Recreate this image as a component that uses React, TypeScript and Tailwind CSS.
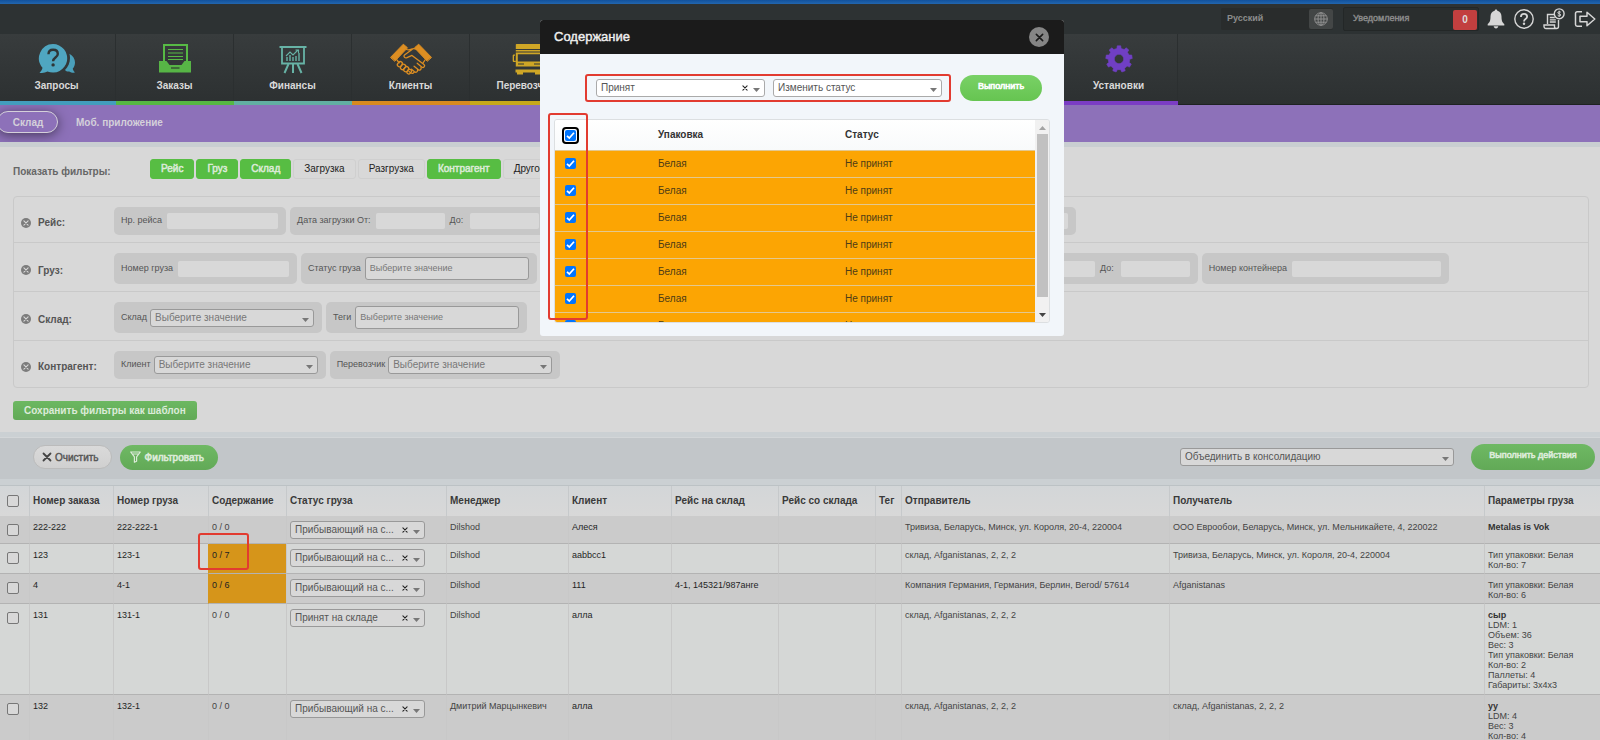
import type { ReactNode } from "react";

const FONT = "font-['Liberation_Sans',Arial,sans-serif]";

/* ---------- icons ---------- */

function QuestionBubbles() {
  return (
    <svg width="38" height="30" viewBox="0 0 38 30">
      <path d="M27 26c3-3 5-7 5-12 0-1.500-.2-3-.6-4.300C35 11.500 37 15 37 18.500c0 2.500-.9 4.600-2.300 6.300.5 1.600 1.300 2.900 2.300 3.800-2.500.2-4.400-.3-5.800-1.200-1.300.4-2.700.3-4.200-1.400z" fill="#4a9fba" />
      <path d="M15 0a14.300 14.300 0 1 1-5.600 27.500C7.400 28.700 4.600 29.200 1.500 28.700c1.800-1.500 2.700-3.300 3-5A14.300 14.300 0 0 1 15 0z" fill="#4fa6c1" />
      <path d="M10.500 10.200c0-2.800 2-4.400 4.600-4.400 2.700 0 4.700 1.600 4.700 4.200 0 3.600-4.700 3.500-4.700 7.200" fill="none" stroke="#2f3536" strokeWidth="2.400" />
      <circle cx="15.100" cy="20.900" r="1.700" fill="#2f3536" />
    </svg>
  );
}

function OrderTray() {
  return (
    <svg width="34" height="30" viewBox="0 0 34 30">
      <path d="M6 17V1h23v16" fill="none" stroke="#57ba45" strokeWidth="2" />
      <path d="M10 5.500h15M10 9h15M10 12.500h15M10 15.500h15" stroke="#57ba45" strokeWidth="1.200" />
      <path d="M1 17h7.500l3 4h12l3-4H33v11.500H1z" fill="#57b546" />
      <path d="M13 24h8.500" stroke="#2f3a30" strokeWidth="1.200" />
    </svg>
  );
}

function FinanceBoard() {
  return (
    <svg width="28" height="30" viewBox="0 0 28 30" fill="none" stroke="#67b3a6">
      <path d="M.5 3h27" strokeWidth="2" />
      <path d="M3 4v15.500h22V4" strokeWidth="1.800" />
      <path d="M8 17v-4M11 17v-6M14 17v-4M17 17v-5M20 17V9" strokeWidth="1.400" />
      <path d="M7 12l4-4 3 3 5-5M16.500 6H19.500v3" strokeWidth="1.100" />
      <path d="M9.500 20L5.500 29M14 20v9M18.500 20l4 9" strokeWidth="2" />
    </svg>
  );
}

function Handshake() {
  return (
    <svg width="42" height="32" viewBox="0 0 42 32" fill="none" stroke="#dd8e22" strokeLinejoin="round" strokeLinecap="round">
      <path d="M.7 14.200L13.300 1.200l4.200 3.600L5 18z" fill="#dd8e22" strokeWidth="1" />
      <path d="M41.300 14.200L28.700 1.200l-4.200 3.600L37 18z" fill="#dd8e22" strokeWidth="1" />
      <path d="M16.500 6.500c2 .8 3 .6 5-.4 2-.9 3.500-.6 5 .2" strokeWidth="1.300" />
      <path d="M22 6.500l-7.500 5.500c-1.400 1.300.2 3.400 2.500 2.700l5-2.300L34 21.500c1.600 1.600-.4 3.900-2.300 2.500l-4.500-3.800" strokeWidth="1.300" />
      <path d="M31 24.500c.8 1.900-1.200 3.300-2.900 2.100l-4-3.400M27.500 27c.5 1.800-1.500 2.900-3 1.800l-3-2.600M24 29.200c-.5 1.300-2 1.500-3.300.5l-1.700-1.300" strokeWidth="1.300" />
      <path d="M7 17l2.200 2.800M35 17l-2 3" strokeWidth="1.300" />
      <g strokeWidth="1.300">
        <rect x="8" y="18.500" width="4" height="5.500" rx="2" transform="rotate(40 10 21)" />
        <rect x="11" y="21" width="4" height="5.800" rx="2" transform="rotate(40 13 24)" />
        <rect x="14.300" y="23.500" width="4" height="5.500" rx="2" transform="rotate(40 16.300 26)" />
        <rect x="17.500" y="26" width="3.600" height="5" rx="1.800" transform="rotate(40 19 28.500)" />
      </g>
    </svg>
  );
}

function TruckFront() {
  return (
    <svg width="34" height="32" viewBox="0 0 34 32" fill="#cfa626">
      <path d="M4.500 1h25c.4 0 .7.300.7.700V6H3.800V1.700c0-.4.300-.7.700-.7z" />
      <path d="M3.800 7h26.400v1.500H3.800z" />
      <path fillRule="evenodd" d="M3.800 9.500h26.400v14H3.800zM5.800 11.300v7.200h22.400v-7.200z" />
      <path d="M3 11.500v1.200H2v5h1.800v1.200H1.600c-.5 0-.9-.4-.9-.9v-5.600c0-.5.400-.9.900-.9zM31 11.500v1.200h1v5h-1.800v1.200h2.200c.5 0 .9-.4.900-.9v-5.600c0-.5-.4-.9-.9-.9z" />
      <path d="M3.500 26.500h27v3h-27zM5 29.500h6v2H5zM23 29.500h6v2h-6z" />
      <path d="M6 21h6M22 21h6" stroke="#2f3536" strokeWidth="1" />
    </svg>
  );
}

function Gear() {
  const teeth = 9;
  const step = (Math.PI * 2) / teeth;
  const at = (r: number, a: number) => `${(14 + r * Math.sin(a)).toFixed(2)} ${(14 - r * Math.cos(a)).toFixed(2)}`;
  let d = "";
  for (let i = 0; i < teeth; i++) {
    const a = i * step;
    d += `${i ? "L" : "M"}${at(10.800, a - step * 0.280)}L${at(13.300, a - step * 0.190)}L${at(13.300, a + step * 0.190)}L${at(10.800, a + step * 0.280)}`;
  }
  d += "ZM14 9.300a4.700 4.700 0 1 0 0 9.400a4.700 4.700 0 1 0 0-9.400Z";
  return (
    <svg width="28" height="28" viewBox="0 0 28 28">
      <path d={d} fill="#703fc4" fillRule="evenodd" stroke="#703fc4" strokeWidth=".6" strokeLinejoin="round" />
    </svg>
  );
}

function Globe() {
  return (
    <svg width="14" height="14" viewBox="0 0 14 14" fill="none" stroke="#8f8f8f" strokeWidth="1">
      <circle cx="7" cy="7" r="6.300" />
      <ellipse cx="7" cy="7" rx="3" ry="6.300" />
      <path d="M7 .7v12.600M.7 7h12.600M1.700 3.800h10.600M1.700 10.200h10.600" />
    </svg>
  );
}

function Bell() {
  return (
    <svg width="18" height="20" viewBox="0 0 18 20" fill="#d6d6d6">
      <path d="M9 .5c.8 0 1.300.5 1.300 1.300 2.700.6 4.200 2.900 4.200 5.700 0 4.500 1 6 2.800 7.500V16.500H.7V15c1.800-1.500 2.800-3 2.800-7.500 0-2.800 1.500-5.100 4.200-5.700C7.700 1 8.200.5 9 .5z" />
      <path d="M6.700 17.300h4.600c-.2 1.300-1.100 2.200-2.300 2.200s-2.100-.9-2.300-2.200z" />
    </svg>
  );
}

function HelpCircle() {
  return (
    <svg width="20" height="20" viewBox="0 0 20 20" fill="none" stroke="#d6d6d6">
      <circle cx="10" cy="10" r="9.200" strokeWidth="1.400" />
      <path d="M6.900 8c0-2 1.300-3.100 3.100-3.100s3.100 1 3.100 2.800c0 2.400-3.100 2.300-3.100 4.700" strokeWidth="1.800" />
      <circle cx="10" cy="14.800" r="1.200" fill="#d6d6d6" stroke="none" />
    </svg>
  );
}

function Invoice() {
  return (
    <svg width="22" height="22" viewBox="0 0 22 22" fill="none" stroke="#d6d6d6" strokeWidth="1.400">
      <path d="M4.500 16V6.500h7M15.500 12v6.500c0 1-.8 2-2 2H3c-1.300 0-2-1-2-2.200V17h10.500v1.800c0 1 .8 1.700 2 1.700" />
      <path d="M6.800 9.500h5M6.800 11.800h6M6.800 14h6" strokeWidth="1.300" />
      <circle cx="16.200" cy="5.800" r="4.900" fill="#2d3233" />
      <path d="M17.800 4.300c-.4-.7-3-.9-3 .4 0 1.500 3 .8 3 2.300 0 1.300-2.800 1.200-3.200.2M16.200 2.700v6.200" strokeWidth="1" />
    </svg>
  );
}

function Logout() {
  return (
    <svg width="22" height="18" viewBox="0 0 22 18" fill="none" stroke="#d6d6d6" strokeWidth="1.500" strokeLinejoin="round">
      <path d="M8 1.700H3.200C2.200 1.700 1.500 2.400 1.500 3.400v11.200c0 1 .7 1.700 1.700 1.700H8" />
      <path d="M6 6.200h7V2.300L20.800 9l-7.800 6.700v-3.900H6z" />
    </svg>
  );
}

function Cross({ className, size }: { className: string; size: string }) {
  return (
    <svg className={`${size} ${className}`} viewBox="0 0 10 10" fill="none" stroke="currentColor" strokeWidth="1.800" strokeLinecap="round">
      <path d="M1.500 1.500l7 7M8.500 1.500l-7 7" />
    </svg>
  );
}

function Caret({ className }: { className: string }) {
  return (
    <svg className={`h-1 w-[7px] ${className}`} viewBox="0 0 7 4">
      <path d="M0 0h7L3.500 4z" fill="currentColor" />
    </svg>
  );
}

/* ---------- controls ---------- */

function SelectBox({ label, value, width, clear, tone = "bg-[#d8d8d8] border-[#999] text-[#555]" }: { label: string; value: string; width: string; clear?: boolean; tone?: string }) {
  return (
    <span className={`relative block h-[18px] ${width}`}>
      <select aria-label={label} className={`block h-full w-full appearance-none rounded-[3px] border pl-1 pr-2 text-[10px] leading-4 ${tone}`}>
        <option>{value}</option>
      </select>
      {clear && <Cross size="size-[6px]" className="pointer-events-none absolute right-[17px] top-[6px] text-[#222]" />}
      <Caret className="pointer-events-none absolute right-[5px] top-[9px] text-[#777]" />
    </span>
  );
}

function Group({ className = "", children }: { className?: string; children: ReactNode }) {
  return <div className={`flex items-center gap-[3px] rounded-[5px] bg-[#c7c7c7] pl-[7px] pr-2 ${className}`}>{children}</div>;
}

function TextField({ label, width, gap = "gap-[5px]" }: { label: string; width: string; gap?: string }) {
  return (
    <label className={`flex items-center whitespace-nowrap ${gap}`}>
      {label}
      <input className={`h-4 rounded-xs bg-[#d8d8d8] ${width}`} />
    </label>
  );
}

function TagField({ label }: { label: string }) {
  return (
    <label className="flex items-center gap-1 whitespace-nowrap">
      {label}
      <input placeholder="Выберите значение" className="h-[23px] w-[164px] rounded-[3px] border border-[#999] bg-[#d8d8d8] pb-0.5 pl-1 text-[9px] placeholder:text-[#777]" />
    </label>
  );
}

function PickField({ label }: { label: string }) {
  return (
    <div className="flex items-center gap-[3px] whitespace-nowrap">
      <span>{label}</span>
      <SelectBox label={label} value="Выберите значение" width="w-[164px]" tone="bg-[#d8d8d8] border-[#999] text-[#777]" />
    </div>
  );
}

function FilterRow({ title, height, last, children }: { title: string; height: string; last?: boolean; children: ReactNode }) {
  return (
    <div className={`flex border-[#c9c9c9] pt-[10px] ${last ? "" : "border-b"} ${height}`}>
      <div className="flex w-[100px] items-center gap-[7px] pl-[7px] pt-[3px]">
        <button aria-label={`Убрать ${title}`} className="flex size-[10px] items-center justify-center rounded-full bg-[#7c7c7c] text-[#d8d8d8]">
          <Cross size="size-[6px]" className="" />
        </button>
        <span className="text-[10px] font-bold text-[#555]">{title}</span>
      </div>
      <div className="flex gap-1 text-[9px] text-[#555]">{children}</div>
    </div>
  );
}

/* ---------- data ---------- */

const NAV = [
  { title: "Запросы", icon: <QuestionBubbles />, line: "border-[#439dbd]" },
  { title: "Заказы", icon: <OrderTray />, line: "border-[#56b842]" },
  { title: "Финансы", icon: <FinanceBoard />, line: "border-[#62afa2]" },
  { title: "Клиенты", icon: <Handshake />, line: "border-[#d88a20]" },
  { title: "Перевозчики", icon: <TruckFront />, line: "border-[#c6a91b]" },
];

const CHIPS: [string, boolean][] = [
  ["Рейс", true],
  ["Груз", true],
  ["Склад", true],
  ["Загрузка", false],
  ["Разгрузка", false],
  ["Контрагент", true],
  ["Другое", false],
];

const COLS: [string, string][] = [
  ["Номер заказа", "w-[84px]"],
  ["Номер груза", "w-[95px]"],
  ["Содержание", "w-[78px]"],
  ["Статус груза", "w-[160px]"],
  ["Менеджер", "w-[122px]"],
  ["Клиент", "w-[103px]"],
  ["Рейс на склад", "w-[107px]"],
  ["Рейс со склада", "w-[97px]"],
  ["Тег", "w-[26px]"],
  ["Отправитель", "w-[268px]"],
  ["Получатель", "w-[315px]"],
  ["Параметры груза", ""],
];

type Order = { id: string; cargo: string; count: string; hot?: boolean; status: string; manager: string; client: string; trip?: string; from: string; to: string; name?: string; params: string[]; height: string };

const ARRIVING = "Прибывающий на с...";
const ORDERS: Order[] = [
  { id: "222-222", cargo: "222-222-1", count: "0 / 0", status: ARRIVING, manager: "Dilshod", client: "Алеся", from: "Тривиза, Беларусь, Минск, ул. Короля, 20-4, 220004", to: "ООО Еврообои, Беларусь, Минск, ул. Мельникайете, 4, 220022", name: "Metalas is Vok", params: [], height: "h-7" },
  { id: "123", cargo: "123-1", count: "0 / 7", hot: true, status: ARRIVING, manager: "Dilshod", client: "aabbcc1", from: "склад, Afganistanas, 2, 2, 2", to: "Тривиза, Беларусь, Минск, ул. Короля, 20-4, 220004", params: ["Тип упаковки: Белая", "Кол-во: 7"], height: "h-[30px]" },
  { id: "4", cargo: "4-1", count: "0 / 6", hot: true, status: ARRIVING, manager: "Dilshod", client: "111", trip: "4-1, 145321/987анге", from: "Компания Германия, Германия, Берлин, Berod/ 57614", to: "Afganistanas", params: ["Тип упаковки: Белая", "Кол-во: 6"], height: "h-[30px]" },
  { id: "131", cargo: "131-1", count: "0 / 0", status: "Принят на складе", manager: "Dilshod", client: "алла", from: "склад, Afganistanas, 2, 2, 2", to: "", name: "сыр", params: ["LDM: 1", "Объем: 36", "Вес: 3", "Тип упаковки: Белая", "Кол-во: 2", "Паллеты: 4", "Габариты: 3x4x3"], height: "h-[91px]" },
  { id: "132", cargo: "132-1", count: "0 / 0", status: ARRIVING, manager: "Дмитрий Марцынкевич", client: "алла", from: "склад, Afganistanas, 2, 2, 2", to: "склад, Afganistanas, 2, 2, 2", name: "уу", params: ["LDM: 4", "Вес: 3", "Кол-во: 4"], height: "h-[60px]" },
];

/* ---------- page parts ---------- */

function TopBar() {
  return (
    <div className="flex h-[30px] items-center justify-end bg-[#2d3233] pr-1">
      <div className="mr-[10px] flex h-[22px] w-[112px] items-center justify-between rounded-xs bg-[#292c2c] pl-[6px]">
        <span className="text-[9px] font-bold text-[#8c8c8c]">Русский</span>
        <button aria-label="Язык" className="flex h-5 w-6 items-center justify-center rounded-xs bg-[#434646]">
          <Globe />
        </button>
      </div>
      <div className="mr-2 flex h-6 w-[136px] items-center justify-between rounded-xs border border-[#232727] bg-[#2a2e2e] pl-[9px] pr-px">
        <span className="text-[9px] text-[#8c8c8c] [-webkit-text-stroke:0.4px]">Уведомления</span>
        <button className="mt-0.5 h-5 w-6 rounded-xs bg-[#c23f3f] text-[10px] font-bold leading-none text-[#ddd]">0</button>
      </div>
      <div className="flex items-center gap-[9px]">
        <button aria-label="Оповещения"><Bell /></button>
        <button aria-label="Помощь"><HelpCircle /></button>
        <button aria-label="Счета"><Invoice /></button>
        <button aria-label="Выход"><Logout /></button>
      </div>
    </div>
  );
}

function NavCell({ title, icon, line }: { title: string; icon: ReactNode; line: string }) {
  return (
    <a href="#" className={`flex w-[118px] shrink-0 flex-col items-center border-b-4 ${line}`}>
      <span className="flex h-11 w-full items-center justify-center border-r border-[#2b2f30] pt-[6px]">{icon}</span>
      <span className="w-full flex-1 border-r border-[#2b2f30] pt-0.5 text-center text-[10px] font-bold leading-3 text-[#d9d9d9]">{title}</span>
    </a>
  );
}

function MainNav() {
  return (
    <nav className="flex h-[71px] overflow-hidden bg-linear-to-b from-[#383c3d] to-[#2c3031] shadow-[inset_0_-1px_0_#1e2222]">
      <div className="-ml-0.5 flex">
        {NAV.map((n) => (
          <NavCell key={n.title} {...n} />
        ))}
        <div className="w-[472px] shrink-0" />
        <NavCell title="Установки" icon={<Gear />} line="border-[#7b3dc4]" />
      </div>
    </nav>
  );
}

function SubNav() {
  return (
    <nav className="flex h-[37px] items-center gap-[18px] overflow-hidden bg-[#8d71b9] pb-[3px] text-[10px] font-bold text-[#d4d0da]">
      <a href="#" className="-ml-[3px] flex h-[22px] w-[61px] items-center justify-center rounded-full border border-[#d4d0da] bg-[#8d71b9] pl-px shadow-[0_2px_12px_rgba(0,0,0,0.5)]">
        Склад
      </a>
      <a href="#">Моб. приложение</a>
    </nav>
  );
}

function Filters() {
  return (
    <section className="pl-[13px] pr-[11px] pt-3">
      <div className="flex h-5 items-center">
        <span className="w-[137px] pt-1 text-[10px] font-bold text-[#666]">Показать фильтры:</span>
        <div className="flex gap-0.5">
          {CHIPS.map(([t, on]) => (
            <button key={t} className={`h-5 rounded-[3px] border px-[10px] text-[10px] leading-none ${on ? "border-[#57bd43] bg-[#57bd43] text-[#dcebd9] [-webkit-text-stroke:0.5px]" : "border-[#cfcfcf] text-[#222]"}`}>
              {t}
            </button>
          ))}
        </div>
      </div>

      <div className="mt-[17px] rounded-[4px] border border-[#c9c9c9]">
        <FilterRow title="Рейс:" height="h-[46px] pb-[7px]">
          <Group><TextField label="Нр. рейса" width="w-[111px]" /></Group>
          <Group className="w-[260px]">
            <TextField label="Дата загрузки От:" width="w-[69px]" />
            <TextField label="До:" width="w-[69px]" gap="ml-0.5 gap-[7px]" />
          </Group>
          <Group className="w-[522px] justify-end"><TextField label="" width="w-[69px]" /></Group>
        </FilterRow>
        <FilterRow title="Груз:" height="h-[49px] pb-[7px]">
          <Group><TextField label="Номер груза" width="w-[111px]" /></Group>
          <Group><TagField label="Статус груза" /></Group>
          <Group className="w-[657px] justify-end">
            <TextField label="" width="w-[69px]" />
            <TextField label="До:" width="w-[69px]" gap="ml-0.5 gap-[7px]" />
          </Group>
          <Group><TextField label="Номер контейнера" width="w-[149px]" /></Group>
        </FilterRow>
        <FilterRow title="Склад:" height="h-[49px] pb-[7px]">
          <Group><PickField label="Склад" /></Group>
          <Group><TagField label="Теги" /></Group>
        </FilterRow>
        <FilterRow title="Контрагент:" height="h-[46px] pb-2" last>
          <Group><PickField label="Клиент" /></Group>
          <Group><PickField label="Перевозчик" /></Group>
        </FilterRow>
      </div>

      <button className="mt-[13px] block h-[19px] rounded-[3px] bg-linear-to-b from-[#6cb861] to-[#62a957] px-[11px] text-[10px] font-bold leading-none text-[#dcebd9]">
        Сохранить фильтры как шаблон
      </button>
    </section>
  );
}

function ActionBar() {
  return (
    <div className="mt-3 border-t-[5px] border-[#cbd0d3] bg-[#c2c6c9]">
      <div className="flex h-[42px] items-center border-t border-[#d3d6d8] pb-[3px] pl-[33px] pr-[5px]">
        <button className="flex h-6 items-center gap-[3px] rounded-full border border-[#bbb] bg-linear-to-b from-[#dadada] to-[#d0d0d0] pl-2 pr-3 text-[10px] text-[#555] [-webkit-text-stroke:0.4px]">
          <Cross size="size-[10px]" className="text-[#444]" />
          Очистить
        </button>
        <button className="ml-2 flex h-[25px] items-center gap-1 rounded-full bg-linear-to-b from-[#6fb964] to-[#62a957] pl-[10px] pr-[14px] text-[10px] text-[#dcebd9] [-webkit-text-stroke:0.6px]">
          <svg width="11" height="12" viewBox="0 0 11 12" fill="none" stroke="#dcebd9" strokeWidth="1.200" strokeLinejoin="round">
            <path d="M.7 1h9.600L6.600 5.800v4.400l-2.200 1V5.800zM2.500 3h6" />
          </svg>
          Фильтровать
        </button>
        <div className="ml-auto flex items-center gap-[17px]">
          <SelectBox label="Действие" value="Объединить в консолидацию" width="w-[274px]" />
          <button className="h-[26px] w-[124px] rounded-full bg-linear-to-b from-[#6fb964] to-[#62a957] pb-0.5 text-[9px] text-[#dcebd9] [-webkit-text-stroke:0.6px]">Выполнить действия</button>
        </div>
      </div>
      <div className="h-[7px] bg-[#cbd0d3] shadow-[inset_0_-1px_0_#bcc2c5]" />
    </div>
  );
}

function Tick({ label }: { label: string }) {
  return <input type="checkbox" aria-label={label} className="block size-3 appearance-none rounded-xs border border-[#777] bg-[#d8d8d8]" />;
}

function OrdersTable() {
  return (
    <table className="w-full table-fixed border-separate border-spacing-0 text-left text-[9px] leading-[10px] text-[#444]">
      <thead>
        <tr className="h-[30px] bg-linear-to-b from-[#d3d6d8] to-[#d8d8d8]">
          <th className="w-[29px] pl-[7px]"><Tick label="Выбрать все" /></th>
          {COLS.map(([t, w]) => (
            <th key={t} className={`border-l border-[#c6c9cb] pl-[3px] text-[10px] font-bold text-[#3a3a3a] ${w}`}>{t}</th>
          ))}
        </tr>
      </thead>
      <tbody>
        {ORDERS.map((o) => (
          <tr key={o.id} className={`${o.height} align-top odd:bg-[#cbcbcb] even:bg-[#d5d7d6] [&>td]:whitespace-nowrap [&>td]:border-b [&>td]:border-b-[#b3b3b3] [&>td]:border-l [&>td]:border-l-[#c8c8c8] [&>td]:pl-[3px] [&>td]:pt-[6px]`}>
            <td className="border-l-0!"><div className="pl-1 pt-0.5"><Tick label={o.id} /></div></td>
            <td className="text-[#1f1f1f]">{o.id}</td>
            <td className="text-[#1f1f1f]">{o.cargo}</td>
            {o.hot ? (
              <td className="relative border-l-[#d6951a]! bg-[#d6951a] text-[#222]">
                {o.count}
                {o.id === "123" && <span className="pointer-events-none absolute -left-[11px] -top-[11px] z-10 h-[37px] w-[51px] rounded-[3px] border-2 border-[#e23b30]" />}
              </td>
            ) : (
              <td>{o.count}</td>
            )}
            <td className="pt-[5px]!"><SelectBox label="Статус груза" value={o.status} width="w-[135px]" clear /></td>
            <td>{o.manager}</td>
            <td className="text-[#1f1f1f]">{o.client}</td>
            <td className="text-[#1f1f1f]">{o.trip}</td>
            <td />
            <td />
            <td>{o.from}</td>
            <td>{o.to}</td>
            <td>
              {o.name && <b className="block text-[#333]">{o.name}</b>}
              {o.params.map((p) => (
                <div key={p}>{p}</div>
              ))}
            </td>
          </tr>
        ))}
      </tbody>
    </table>
  );
}

function CheckedBox({ label, focus }: { label: string; focus?: boolean }) {
  return (
    <span className={`relative block size-[11px] ${focus ? "rounded-[1px] outline-2 outline-offset-1 outline-black" : ""}`}>
      <input type="checkbox" defaultChecked aria-label={label} className="block size-[11px] appearance-none rounded-xs bg-[#0075ff]" />
      <svg className="pointer-events-none absolute inset-0" width="11" height="11" viewBox="0 0 11 11" fill="none" stroke="#fff" strokeWidth="1.700">
        <path d="M2 5.800l2.300 2.300L9 2.700" />
      </svg>
    </span>
  );
}

function ContentDialog() {
  const tone = "bg-white border-[#aaa] text-[#555]";
  return (
    <div role="dialog" aria-label="Содержание" className="absolute left-1/2 top-5 z-20 ml-0.5 h-[316px] w-[524px] -translate-x-1/2 overflow-hidden rounded-[3px] bg-[#f2f6fa]">
      <div className="flex h-[34px] items-center justify-between bg-[#1b1b1b] pl-[14px] pr-[15px]">
        <h2 className="text-[13px] leading-4 text-[#f0f0f0] [-webkit-text-stroke:0.4px]">Содержание</h2>
        <button aria-label="Закрыть" className="flex size-5 items-center justify-center rounded-full bg-[#858585] text-[#1b1b1b]">
          <Cross size="size-[9px]" className="" />
        </button>
      </div>

      <div className="flex items-center gap-[9px] pl-[45px] pt-5">
        <div className="flex h-7 items-center gap-2 rounded-[3px] border-2 border-[#e23b30] pl-[9px] pr-[7px]">
          <SelectBox label="Статус" value="Принят" width="w-[169px]" clear tone={tone} />
          <SelectBox label="Действие" value="Изменить статус" width="w-[169px]" tone={tone} />
        </div>
        <button className="h-[26px] w-[82px] rounded-full bg-linear-to-b from-[#79d166] to-[#66c451] pb-0.5 text-[9px] text-white [-webkit-text-stroke:0.6px]">Выполнить</button>
      </div>

      <div className="relative mx-[14px] mt-[17px]">
        <div className="flex h-[204px] overflow-hidden rounded-[3px] border border-[#dcdfe1]">
          <div className="min-w-0 flex-1">
            <table className="w-full table-fixed border-separate border-spacing-0 text-left text-[10px] leading-3 text-[#4d3c17]">
              <thead>
                <tr className="h-[30px] bg-linear-to-b from-white to-[#f8fafb] text-[#333]">
                  <th className="w-[103px] pl-[10px]"><CheckedBox label="Выбрать все" focus /></th>
                  <th className="w-[187px] font-bold">Упаковка</th>
                  <th className="font-bold">Статус</th>
                </tr>
              </thead>
              <tbody>
                {[1, 2, 3, 4, 5, 6, 7].map((n) => (
                  <tr key={n} className="h-[27px] bg-[#fca503] [&>td]:border-t [&>td]:border-[#e3c88f]">
                    <td className="pb-px pl-[10px]"><CheckedBox label={`Место ${n}`} /></td>
                    <td>Белая</td>
                    <td>Не принят</td>
                  </tr>
                ))}
              </tbody>
            </table>
          </div>
          <div className="flex w-[14px] shrink-0 flex-col items-center justify-between bg-[#f1f1f1] py-[5px]">
            <Caret className="mt-px rotate-180 text-[#a3a3a3]" />
            <div className="mb-4 mt-1 w-[11px] flex-1 bg-[#c1c1c1]" />
            <Caret className="text-[#444]" />
          </div>
        </div>
        <span className="pointer-events-none absolute -left-[6px] -top-[6px] h-[207px] w-10 rounded-[3px] border-2 border-[#e23b30]" />
      </div>
    </div>
  );
}

export default function App() {
  return (
    <div className={`relative h-screen overflow-hidden bg-[#d8d8d8] ${FONT}`}>
      <div className="h-1 bg-linear-to-b from-[#11519c] to-[#2266ae]" />
      <TopBar />
      <MainNav />
      <SubNav />
      <div className="h-[5px] bg-[#c9ced1]" />
      <Filters />
      <ActionBar />
      <OrdersTable />
      <ContentDialog />
    </div>
  );
}
